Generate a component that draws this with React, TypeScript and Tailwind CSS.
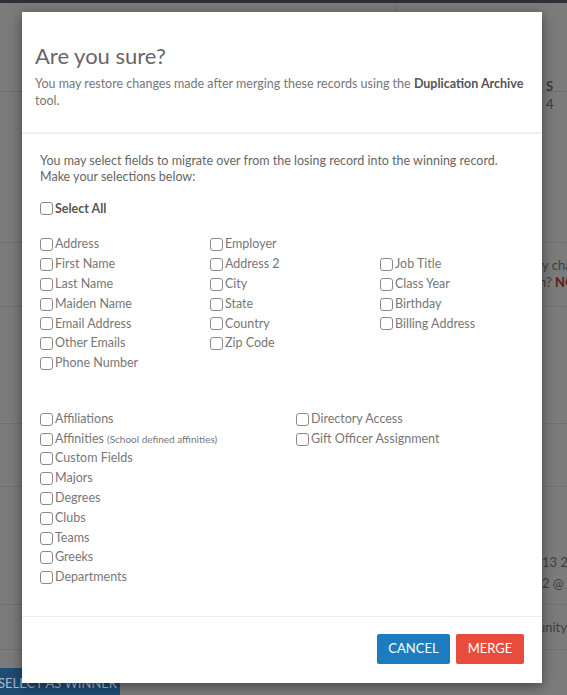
import React from "react";

const Box = () => (
  <span className="inline-block w-[13px] h-[13px] border border-[#8a8a8a] rounded-[3px] bg-white mr-[2px] shrink-0" />
);

const Item = ({ label, small }: { label: string; small?: string }) => (
  <div className="h-[19.8px] flex items-center whitespace-nowrap">
    <Box />
    <span>{label}</span>
    {small && <span className="text-[10px] ml-[3px]">{small}</span>}
  </div>
);

const Empty = () => <div className="h-[19.8px]" />;

export default function App() {
  return (
    <div className="relative w-[567px] h-[695px] overflow-hidden bg-[#7b7b7b] font-['Lato','Liberation_Sans',sans-serif]">
      {/* background page */}
      <div className="h-[3px] bg-[#2e3035]" />
      <div className="flex h-[89px] border-b border-[#6d6d6d]">
        <div className="w-[395px]" />
        <div className="flex-1 border-l border-[#727272]" />
      </div>
      <div className="absolute left-[546px] top-[77px] text-[13px] font-bold text-[#3a3a3a]">S</div>
      <div className="absolute left-[546px] top-[95px] text-[13px] text-[#3a3a3a]">4</div>
      <div className="absolute left-0 top-[242px] w-full border-t border-[#717171]" />
      <div className="absolute left-0 top-[306px] w-full border-t border-[#717171]" />
      <div className="absolute left-[542px] top-[257px] text-[13px] text-[#3f3f3f] leading-[17px] whitespace-nowrap">
        <div>y cha</div>
        <div className="-ml-[3px]">
          n? <span className="font-bold text-[#5a1e1e]">NO</span>
        </div>
      </div>
      <div className="absolute left-0 top-[423px] w-full border-t border-[#717171]" />
      <div className="absolute left-0 top-[486px] w-full border-t border-[#717171]" />
      <div className="absolute left-[542px] top-[552px] text-[13px] text-[#3f3f3f] leading-[21px] whitespace-nowrap">
        <div>13 20</div>
        <div>2 @ 0</div>
      </div>
      <div className="absolute left-0 top-[604px] w-full border-t border-[#717171]" />
      <div className="absolute left-[538px] top-[618px] text-[13px] text-[#3f3f3f] whitespace-nowrap">unity</div>
      <div className="absolute left-0 top-[649px] w-full border-t border-[#717171]" />
      <div className="absolute left-0 top-[668px] w-[120px] h-[27px] bg-[#1f4c72] text-[#aab9c7] text-[13px] flex items-center whitespace-nowrap overflow-hidden">
        <span className="-ml-[2px] mt-[4px]">SELECT AS WINNER</span>
      </div>

      {/* modal */}
      <div className="absolute left-[22px] top-[12px] w-[520px] h-[671px] bg-white shadow-[0_3px_12px_rgba(0,0,0,0.45)] flex flex-col">
        <div className="px-[13px] pt-[31px] pb-[23px] border-b-2 border-[#efefef]">
          <h2 className="text-[22px] leading-[26px] text-[#666] font-normal">Are you sure?</h2>
          <p className="mt-[6px] text-[12.5px] leading-[17px] text-[#777]">
            You may restore changes made after merging these records using the{" "}
            <span className="font-bold text-[#555]">Duplication Archive</span> tool.
          </p>
        </div>
        <div className="flex-1 px-[18px] pt-[19px] text-[12.5px] text-[#777] border-b border-[#ececec]">
          <p className="leading-[16px] text-[#666]">
            You may select fields to migrate over from the losing record into the winning record.
            <br />
            Make your selections below:
          </p>
          <div className="mt-[14px] h-[19.8px] flex items-center font-bold text-[#555]">
            <Box />
            <span>Select All</span>
          </div>
          <div className="mt-[16px] flex">
            <div className="w-[170px]">
              <Item label="Address" />
              <Item label="First Name" />
              <Item label="Last Name" />
              <Item label="Maiden Name" />
              <Item label="Email Address" />
              <Item label="Other Emails" />
              <Item label="Phone Number" />
            </div>
            <div className="w-[170px]">
              <Item label="Employer" />
              <Item label="Address 2" />
              <Item label="City" />
              <Item label="State" />
              <Item label="Country" />
              <Item label="Zip Code" />
            </div>
            <div className="w-[144px]">
              <Empty />
              <Item label="Job Title" />
              <Item label="Class Year" />
              <Item label="Birthday" />
              <Item label="Billing Address" />
            </div>
          </div>
          <div className="mt-[36px] flex">
            <div className="w-[256px]">
              <Item label="Affiliations" />
              <Item label="Affinities" small="(School defined affinities)" />
              <Item label="Custom Fields" />
              <Item label="Majors" />
              <Item label="Degrees" />
              <Item label="Clubs" />
              <Item label="Teams" />
              <Item label="Greeks" />
              <Item label="Departments" />
            </div>
            <div className="flex-1">
              <Item label="Directory Access" />
              <Item label="Gift Officer Assignment" />
            </div>
          </div>
        </div>
        <div className="h-[66px] flex items-start justify-end gap-[6px] pr-[18px] pt-[17px]">
          <button className="h-[30px] w-[73px] bg-[#1b7dc0] text-white text-[13px] rounded-[2px]">CANCEL</button>
          <button className="h-[30px] w-[68px] bg-[#e84c3d] text-white text-[13px] rounded-[2px]">MERGE</button>
        </div>
      </div>
    </div>
  );
}
